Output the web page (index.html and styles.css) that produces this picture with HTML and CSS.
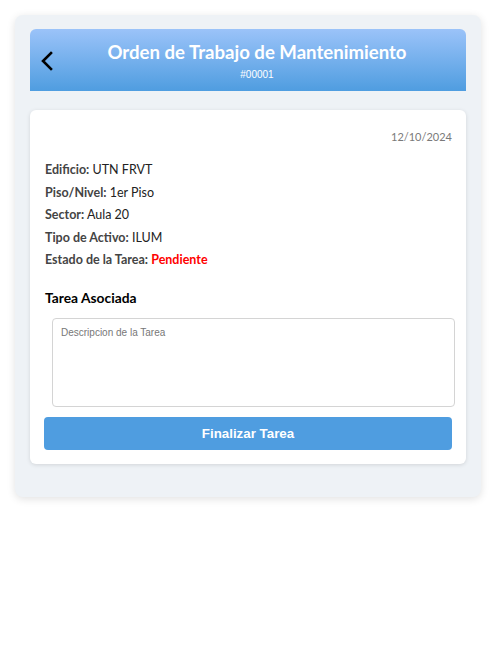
FILE: index.html
```html
<!DOCTYPE html>
<html lang="es">
<head>
<meta charset="utf-8">
<link rel="stylesheet" href="styles.css">
</head>
<body>
<div class="container">
  <header class="header">
    <button class="back" aria-label="Volver">
      <svg width="14" height="20" viewBox="0 0 14 20"><path d="M11 2 L3 10 L11 18" fill="none" stroke="#000" stroke-width="2.6" stroke-linecap="square"/></svg>
    </button>
    <div class="titles">
      <h1 class="title">Orden de Trabajo de Mantenimiento</h1>
      <div class="code">#00001</div>
    </div>
  </header>
  <main class="card">
    <div class="date">12/10/2024</div>
    <ul class="info">
      <li><span class="lbl">Edificio:</span> UTN FRVT</li>
      <li><span class="lbl">Piso/Nivel:</span> 1er Piso</li>
      <li><span class="lbl">Sector:</span> Aula 20</li>
      <li><span class="lbl">Tipo de Activo:</span> ILUM</li>
      <li><span class="lbl">Estado de la Tarea:</span> <span class="status">Pendiente</span></li>
    </ul>
    <h2 class="sub">Tarea Asociada</h2>
    <textarea class="desc" placeholder="Descripcion de la Tarea"></textarea>
    <button class="finish">Finalizar Tarea</button>
  </main>
</div>
</body>
</html>
```
FILE: styles.css
```css
* { box-sizing: border-box; }
body {
  margin: 0;
  padding: 15px;
  background: #fff;
  font-family: Lato, "Noto Sans", sans-serif;
}
.container {
  width: 466px;
  background: #eef2f6;
  border-radius: 8px;
  box-shadow: 0 2px 8px rgba(0,0,0,0.12);
  padding: 14px 15px 33px;
}
.header {
  height: 62px;
  border-radius: 6px 6px 0 0;
  background: linear-gradient(#9bc3f9, #4f9de0);
  display: flex;
  align-items: center;
  padding-left: 10px;
}
.back {
  background: none;
  border: none;
  padding: 0;
  width: 14px;
  height: 20px;
  margin-top: 2px;
  display: flex;
}
.titles {
  flex: 1;
  text-align: center;
  color: #fff;
  padding-right: 6px;
  padding-top: 2px;
}
.title {
  margin: 0;
  font-size: 18.6px;
  font-weight: 700;
  line-height: 26px;
}
.code {
  font-family: "Liberation Sans", Arial, sans-serif;
  font-size: 10px;
  line-height: 19px;
}
.card {
  display: block;
  margin-top: 19px;
  background: #fff;
  border-radius: 6px;
  box-shadow: 0 1px 4px rgba(0,0,0,0.12);
  padding: 19px 14px 14px 15px;
}
.date {
  text-align: right;
  color: #7a7a7a;
  font-size: 11px;
  line-height: 16px;
}
.info {
  list-style: none;
  margin: 14px 0 0;
  padding: 0;
  font-size: 12.5px;
  color: #222;
}
.info li { line-height: 22.6px; }
.lbl { font-weight: 700; color: #444; }
.status { color: #f00; font-weight: 700; }
.sub {
  margin: 16px 0 0;
  font-size: 13.8px;
  font-weight: 700;
  color: #000;
  line-height: 20px;
}
.desc {
  display: block;
  width: 403px;
  height: 89px;
  margin: 10px 0 0 7px;
  border: 1px solid #d4d4d4;
  border-radius: 4px;
  padding: 8px;
  font-family: "Liberation Sans", Arial, sans-serif;
  font-size: 10px;
  resize: none;
}
.desc::placeholder { color: #777; }
.finish {
  display: block;
  width: 408px;
  height: 33px;
  margin: 10px 0 0 -1px;
  background: #4f9de0;
  border: none;
  border-radius: 4px;
  color: #fff;
  font-family: "Liberation Sans", Arial, sans-serif;
  font-weight: 700;
  font-size: 13.33px;
}
```
